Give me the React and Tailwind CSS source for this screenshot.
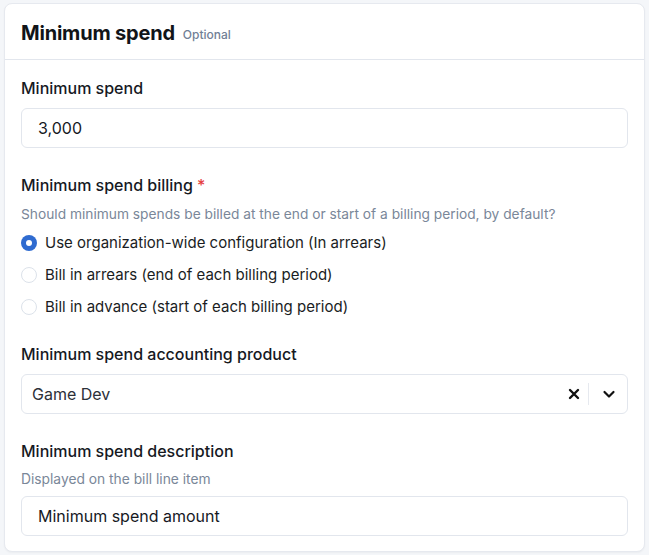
import React from "react";

function Radio({ checked, label }) {
  return (
    <label className="flex h-6 items-center gap-2">
      {checked ? (
        <span className="flex h-4 w-4 items-center justify-center rounded-full bg-[#2f6bd0]">
          <span className="h-[6px] w-[6px] rounded-full bg-white" />
        </span>
      ) : (
        <span className="h-4 w-4 rounded-full border border-[#dce2ea] bg-white" />
      )}
      <span className="text-[15px] text-[#1a1d23]">{label}</span>
    </label>
  );
}

export default function App() {
  return (
    <div
      className="min-h-[555px] w-[649px] bg-[#f4f6f9] pl-1 pt-[3px]"
      style={{ fontFamily: "Inter, 'Noto Sans', sans-serif" }}
    >
      <div className="h-[549px] w-[641px] rounded-lg border border-[#e6e9ef] bg-white shadow-[0_1px_2px_rgba(0,0,0,0.04)]">
        <div className="flex h-[56px] items-center gap-2 border-b border-[#e2e6ed] px-4 pt-[2px]">
          <h1 className="text-[20px] font-bold tracking-[-0.01em] text-[#111418]">Minimum spend</h1>
          <span className="mt-[4px] text-[12px] font-medium text-[#718096]">Optional</span>
        </div>
        <div className="flex flex-col gap-[25px] px-4 pt-4">
          <div>
            <div className="text-[16px] leading-6 font-medium text-[#16191f]">Minimum spend</div>
            <div className="mt-2 flex h-[40px] items-center rounded-md border border-[#e2e6ed] pl-4 text-[16px] text-[#16191f]">
              3,000
            </div>
          </div>
          <div>
            <div className="text-[16px] leading-6 font-medium text-[#16191f]">
              Minimum spend billing <span className="text-[#e53e3e]">*</span>
            </div>
            <div className="mt-[7px] text-[13.75px] leading-5 text-[#7a8799]">
              Should minimum spends be billed at the end or start of a billing period, by default?
            </div>
            <div className="mt-[7px] flex flex-col gap-2">
              <Radio checked label="Use organization-wide configuration (In arrears)" />
              <Radio label="Bill in arrears (end of each billing period)" />
              <Radio label="Bill in advance (start of each billing period)" />
            </div>
          </div>
          <div className="-mt-[2px]">
            <div className="text-[16px] leading-6 font-medium text-[#16191f]">
              Minimum spend accounting product
            </div>
            <div className="mt-2 flex h-[40px] items-center rounded-md border border-[#e2e6ed] pl-[10px] text-[16px] text-[#2d3038]">
              <span className="flex-1">Game Dev</span>
              <span className="flex h-full items-center px-2">
                <svg width="12" height="12" viewBox="0 0 12 12">
                  <path d="M2 2L10 10M10 2L2 10" stroke="#111" strokeWidth="2.4" strokeLinecap="round" />
                </svg>
              </span>
              <span className="h-[22px] w-px bg-[#e6e9ef]" />
              <span className="flex h-full items-center pl-[13px] pr-[11px]">
                <svg width="14" height="14" viewBox="0 0 14 14">
                  <path d="M2.5 5L7 9.5L11.5 5" stroke="#111" strokeWidth="2.2" fill="none" strokeLinecap="round" strokeLinejoin="round" />
                </svg>
              </span>
            </div>
          </div>
          <div>
            <div className="text-[16px] leading-6 font-medium text-[#16191f]">
              Minimum spend description
            </div>
            <div className="mt-[6px] text-[13.8px] leading-5 text-[#7a8799]">Displayed on the bill line item</div>
            <div className="mt-[7px] flex h-[40px] items-center rounded-md border border-[#e2e6ed] pl-4 text-[16px] text-[#16191f]">
              Minimum spend amount
            </div>
          </div>
        </div>
      </div>
    </div>
  );
}
